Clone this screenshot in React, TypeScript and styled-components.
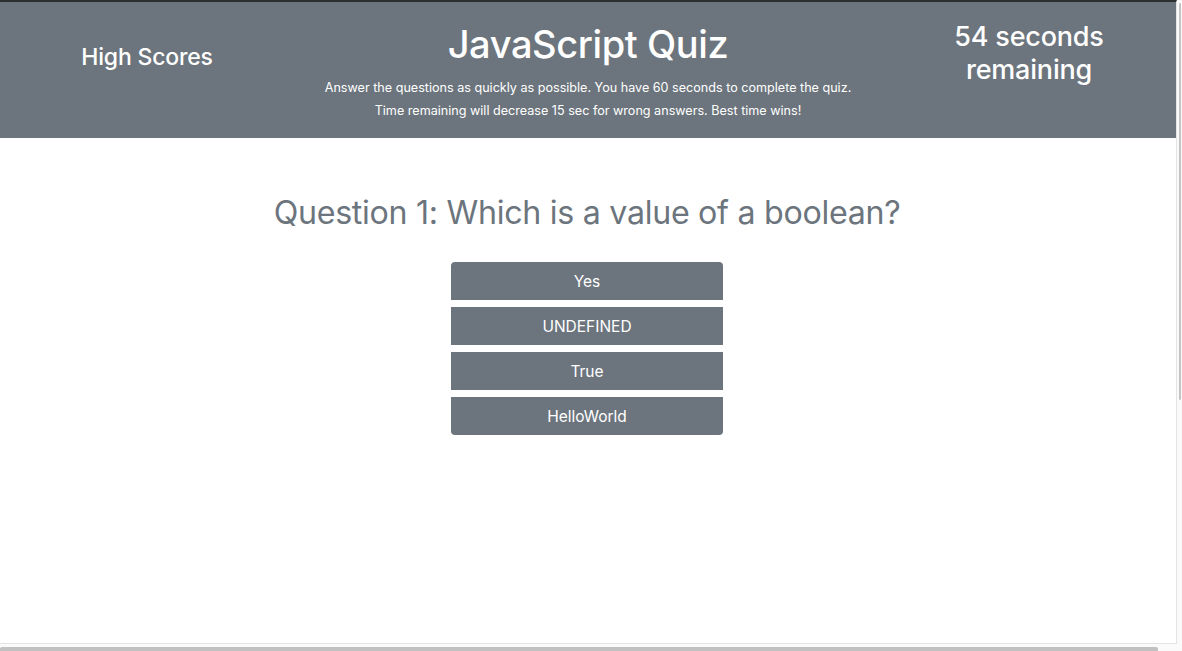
import styled, { createGlobalStyle } from 'styled-components';

const GlobalStyle = createGlobalStyle`
  html, body {
    margin: 0;
    padding: 0;
    overflow: hidden;
    background: #ffffff;
  }
  * {
    box-sizing: border-box;
  }
`;

const answers = ['Yes', 'UNDEFINED', 'True', 'HelloWorld'];

const BrowserFrame = styled.div`
  width: 1182px;
  height: 651px;
  display: grid;
  grid-template-columns: 1fr 5px;
  grid-template-rows: 1fr 7px;
  font-family: Inter, 'Noto Sans', 'Liberation Sans', sans-serif;
  background: #ffffff;
`;

const Viewport = styled.div`
  border-right: 1px solid #e4e4e4;
  border-bottom: 1px solid #e4e4e4;
  border-top: 2px solid #2e2f31;
  overflow: hidden;
`;

const VerticalTrack = styled.div`
  padding: 3px 1px 0 2px;
  background: #fafafa;
`;

const VerticalThumb = styled.div`
  height: 397px;
  background: #c4c4c4;
  border-radius: 2px;
`;

const HorizontalTrack = styled.div`
  grid-column: 1 / 3;
  padding: 3px 24px 0 0;
  background: #fafafa;
`;

const HorizontalThumb = styled.div`
  height: 4px;
  background: #c1c1c1;
  border-radius: 2px 2px 0 0;
`;

const Header = styled.header`
  display: grid;
  grid-template-columns: 1fr 2fr 1fr;
  align-items: start;
  background: #6c757d;
  color: #ffffff;
  padding: 18px 0 15px;
  height: 136px;
`;

const Column = styled.div<{ $offset?: number }>`
  display: flex;
  flex-direction: column;
  align-items: center;
  text-align: center;
  padding-top: ${(p) => p.$offset ?? 0}px;
`;

const HighScores = styled.a`
  font-size: 23px;
  font-weight: 500;
  line-height: 29px;
  color: #ffffff;
  text-decoration: none;
  letter-spacing: -0.2px;
`;

const Title = styled.h1`
  margin: 0 0 8px;
  font-size: 38px;
  font-weight: 500;
  line-height: 48px;
  letter-spacing: -0.4px;
`;

const Subtitle = styled.p`
  margin: 0;
  font-size: 12.6px;
  line-height: 23px;
`;

const Timer = styled.h3`
  margin: 0;
  font-size: 27px;
  font-weight: 500;
  line-height: 33px;
  letter-spacing: -0.2px;
`;

const Main = styled.main`
  display: flex;
  flex-direction: column;
  align-items: center;
  padding: 56px 2px 0 0;
`;

const Question = styled.h2`
  margin: 0 0 30px;
  font-size: 32.2px;
  font-weight: 400;
  line-height: 38px;
  color: #6c757d;
  letter-spacing: -0.3px;
`;

const AnswerList = styled.div`
  display: flex;
  flex-direction: column;
  gap: 7px;
  width: 272px;
`;

const AnswerButton = styled.button`
  height: 38px;
  border: none;
  background: #6c757d;
  color: #ffffff;
  font-family: inherit;
  font-size: 15.5px;
  cursor: pointer;
  border-radius: 0;

  &:first-child {
    border-radius: 4px 4px 0 0;
  }
  &:last-child {
    border-radius: 0 0 4px 4px;
  }
`;

const App = () => {
  return (
    <>
      <GlobalStyle />
      <BrowserFrame>
        <Viewport>
          <Header>
            <Column $offset={23}>
              <HighScores href="#">High Scores</HighScores>
            </Column>
            <Column>
              <Title>JavaScript Quiz</Title>
              <Subtitle>Answer the questions as quickly as possible. You have 60 seconds to complete the quiz.</Subtitle>
              <Subtitle>Time remaining will decrease 15 sec for wrong answers. Best time wins!</Subtitle>
            </Column>
            <Column>
              <Timer>
                54 seconds
                <br />
                remaining
              </Timer>
            </Column>
          </Header>
          <Main>
            <Question>Question 1: Which is a value of a boolean?</Question>
            <AnswerList>
              {answers.map((answer) => (
                <AnswerButton key={answer}>{answer}</AnswerButton>
              ))}
            </AnswerList>
          </Main>
        </Viewport>
        <VerticalTrack>
          <VerticalThumb />
        </VerticalTrack>
        <HorizontalTrack>
          <HorizontalThumb />
        </HorizontalTrack>
      </BrowserFrame>
    </>
  );
};

export default App;
